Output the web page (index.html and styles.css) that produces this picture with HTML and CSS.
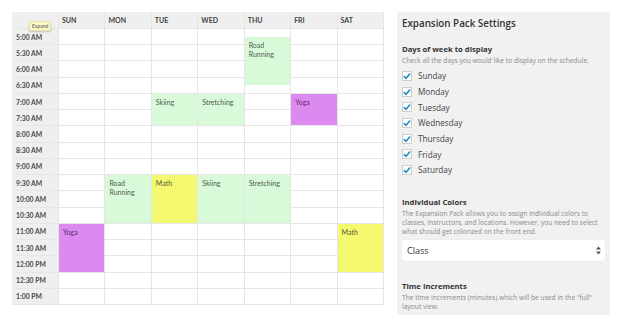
FILE: index.html
```html
<!DOCTYPE html>
<html lang="en">
<head>
    <meta charset="UTF-8">
    <meta name="viewport" content="width=device-width, initial-scale=1.0">
    <title>Schedule – Expansion Pack Settings</title>
    <link rel="stylesheet" href="styles.css">
</head>
<body>
    <div class="page">
        <div class="schedule">
            <div class="grid" id="grid"></div>
            <span class="tip">Expand</span>
        </div>

        <div class="settings">
            <h2>Expansion Pack Settings</h2>

            <h3>Days of week to display</h3>
            <p class="desc">Check all the days you would like to display on the schedule.</p>
            <ul class="days" id="days"></ul>

            <h3 class="gap">Individual Colors</h3>
            <p class="desc">The Expansion Pack allows you to assign individual colors to classes, instructors, and locations. However, you need to select what should get colorized on the front end.</p>
            <div class="select">
                <span>Class</span>
                <svg class="arrows" width="5" height="9" viewBox="0 0 5 9">
                    <path d="M0 3.5 L2.5 0.5 L5 3.5 Z M0 5.5 L2.5 8.5 L5 5.5 Z" fill="#555"/>
                </svg>
            </div>

            <h3 class="gap last">Time Increments</h3>
            <p class="desc">The time increments (minutes) which will be used in the "full" layout view.</p>
        </div>
    </div>
    <script src="script.js"></script>
</body>
</html>
```

FILE: styles.css
```css
body {
    margin: 0;
    background-color: #fff;
    font-family: 'Open Sans', sans-serif;
}
.page {
    display: flex;
    gap: 13px;
    padding: 12px 0 0 12px;
    height: 303px;
    overflow: hidden;
}

/* schedule */
.schedule {
    position: relative;
    width: 372px;
    height: 293px;
    flex: none;
}
.grid {
    display: grid;
    grid-template-columns: 46px repeat(7, 1fr);
    grid-template-rows: 16px repeat(34, 1fr);
    gap: 1px;
    height: 100%;
    box-sizing: border-box;
    padding: 0 1px 1px 0;
    background-color: #e6e6e6;
    font-family: 'Lato', sans-serif;
}
.cell {
    background-color: #fff;
}
.head {
    background-color: #efefef;
    color: #444;
    font-size: 7px;
    font-weight: bold;
    display: flex;
    align-items: center;
    padding-left: 3px;
}
.time {
    background-color: #efefef;
    color: #4a4a4a;
    font-size: 6.8px;
    font-weight: bold;
    display: flex;
    align-items: center;
    padding-left: 4px;
}
.event {
    font-size: 7px;
    line-height: 8.5px;
    padding: 4px 4px;
    color: #4f5a4f;
    z-index: 1;
}
.green {
    background-color: #d9fad9;
}
.yellow {
    background-color: #f5f96f;
    color: #555a30;
}
.purple {
    background-color: #dc8af0;
    color: #5a2a66;
}
.tip {
    position: absolute;
    left: 17px;
    top: 9px;
    padding: 1px 2px;
    font-family: 'Lato', sans-serif;
    font-size: 5px;
    color: #555;
    background-color: #fbf8c4;
    border: 1px solid #e8e4a8;
    border-radius: 2px;
    box-shadow: 0 1px 2px rgba(0,0,0,0.2);
}

/* settings panel */
.settings {
    width: 213px;
    flex: none;
    box-sizing: border-box;
    padding: 5px 5px;
    background-color: #f1f1f1;
    color: #333;
}
.settings h2 {
    margin: 0;
    font-size: 9.8px;
    line-height: 14px;
    font-weight: 600;
}
.settings h3 {
    margin: 12px 0 0;
    font-size: 7.7px;
    line-height: 12px;
    font-weight: bold;
}
.settings h3.gap {
    margin-top: 18px;
}
.settings h3.last {
    margin-top: 19px;
}
.desc {
    margin: 1px 0 0;
    font-size: 6.7px;
    line-height: 9px;
    color: #8a8a8a;
}
.days {
    list-style: none;
    margin: 3px 0 0;
    padding: 0;
}
.days li {
    display: flex;
    align-items: center;
    height: 15.7px;
    font-size: 8.2px;
    color: #444;
}
.box {
    width: 10px;
    height: 10px;
    box-sizing: border-box;
    border: 1px solid #cfcfcf;
    background-color: #fff;
    margin-right: 6px;
    display: flex;
    align-items: center;
    justify-content: center;
}
.select {
    margin-top: 4px;
    height: 21px;
    box-sizing: border-box;
    background-color: #fff;
    border-radius: 2px;
    box-shadow: 0 0 1px rgba(0,0,0,0.15);
    display: flex;
    align-items: center;
    justify-content: space-between;
    padding: 0 4px 0 5px;
    font-size: 9px;
    color: #333;
}
```

FILE: script.js
```js
// schedule data
const days = ['SUN', 'MON', 'TUE', 'WED', 'THU', 'FRI', 'SAT'];
const fullDays = ['Sunday', 'Monday', 'Tuesday', 'Wednesday', 'Thursday', 'Friday', 'Saturday'];
const times = ['5:00 AM', '5:30 AM', '6:00 AM', '6:30 AM', '7:00 AM', '7:30 AM', '8:00 AM', '8:30 AM',
    '9:00 AM', '9:30 AM', '10:00 AM', '10:30 AM', '11:00 AM', '11:30 AM', '12:00 PM', '12:30 PM', '1:00 PM'];

// day index, start in quarter hours after 5:00, length in quarter hours
const events = [
    { day: 4, start: 1, len: 6, name: 'Road Running', color: 'green' },
    { day: 2, start: 8, len: 4, name: 'Skiing', color: 'green' },
    { day: 3, start: 8, len: 4, name: 'Stretching', color: 'green' },
    { day: 5, start: 8, len: 4, name: 'Yoga', color: 'purple' },
    { day: 1, start: 18, len: 6, name: 'Road Running', color: 'green' },
    { day: 2, start: 18, len: 6, name: 'Math', color: 'yellow' },
    { day: 3, start: 18, len: 6, name: 'Skiing', color: 'green' },
    { day: 4, start: 18, len: 6, name: 'Stretching', color: 'green' },
    { day: 0, start: 24, len: 6, name: 'Yoga', color: 'purple' },
    { day: 6, start: 24, len: 6, name: 'Math', color: 'yellow' }
];

const grid = document.getElementById('grid');

function addCell(className, text, col, row, span) {
    const el = document.createElement('div');
    el.className = className;
    el.textContent = text;
    el.style.gridColumn = col;
    el.style.gridRow = row + ' / span ' + span;
    grid.appendChild(el);
}

// header row
addCell('head', '', 1, 1, 1);
days.forEach((d, i) => addCell('head', d, i + 2, 1, 1));

// time rows
times.forEach((t, r) => {
    const row = 2 + r * 2;
    addCell('time', t, 1, row, 2);
    days.forEach((d, i) => addCell('cell', '', i + 2, row, 2));
});

// events
events.forEach(ev => addCell('event ' + ev.color, ev.name, ev.day + 2, 2 + ev.start, ev.len));

// day checkboxes
const list = document.getElementById('days');
fullDays.forEach(name => {
    const li = document.createElement('li');
    li.innerHTML = '<span class="box"><svg width="9" height="8" viewBox="0 0 9 8"><path d="M1 4.2 L3.4 6.5 L8 1.2" fill="none" stroke="#1e8cbe" stroke-width="1.8"/></svg></span>' + name;
    list.appendChild(li);
});
```
